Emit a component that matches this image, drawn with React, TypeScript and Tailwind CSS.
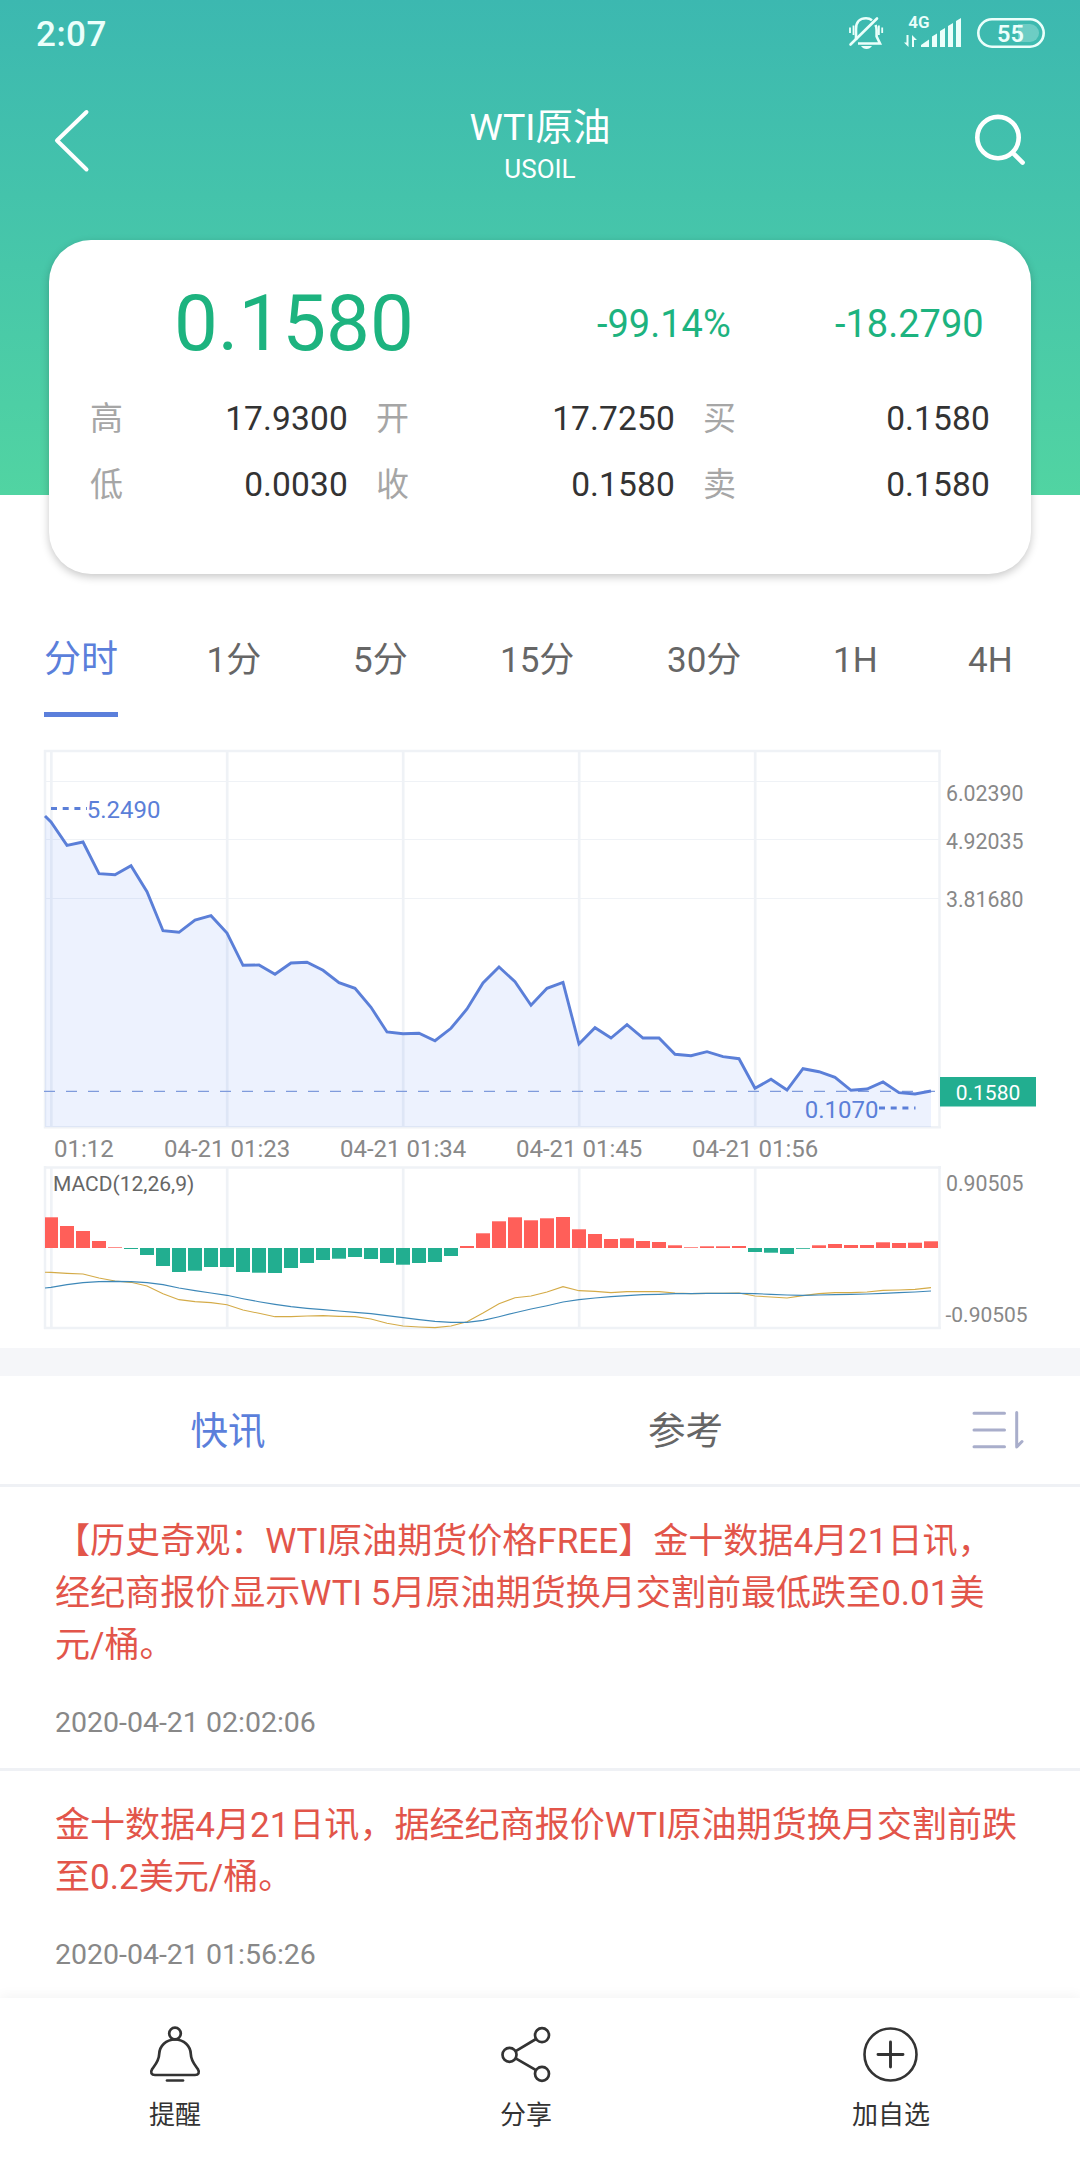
import React from "react";

const FONT = "font-['Roboto','Noto_Sans_CJK_SC',sans-serif]";

interface Cell {
  label: string;
  value: string;
}

interface NewsItem {
  lines: string[];
  time: string;
}

const cells: Cell[][] = [
  [
    { label: "高", value: "17.9300" },
    { label: "开", value: "17.7250" },
    { label: "买", value: "0.1580" },
  ],
  [
    { label: "低", value: "0.0030" },
    { label: "收", value: "0.1580" },
    { label: "卖", value: "0.1580" },
  ],
];

const periods = ["分时", "1分", "5分", "15分", "30分", "1H", "4H"];

const news: NewsItem[] = [
  {
    lines: [
      "【历史奇观：WTI原油期货价格FREE】金十数据4月21日讯，",
      "经纪商报价显示WTI 5月原油期货换月交割前最低跌至0.01美",
      "元/桶。",
    ],
    time: "2020-04-21 02:02:06",
  },
  {
    lines: ["金十数据4月21日讯，据经纪商报价WTI原油期货换月交割前跌", "至0.2美元/桶。"],
    time: "2020-04-21 01:56:26",
  },
];

// chart geometry: one sample every 16px, first sample at x = 51
const X0 = 51;
const STEP = 16;
const PLOT_LEFT = 45;
const gridX = [51.3, 227.2, 403.2, 579.2, 755.2];

const price = [
  822, 845.3, 842, 873.7, 874.7, 865.7, 891.7, 930.7, 932.3, 920, 915.7, 933, 965.3, 965, 974.3, 963,
  962.3, 970.3, 982.7, 988.3, 1007.3, 1032, 1033.7, 1033.3, 1040.7, 1028.3, 1009, 983, 967, 981.7,
  1005.3, 988.3, 982.3, 1044, 1027.7, 1038, 1024.7, 1038, 1038, 1054.3, 1055.7, 1051.7, 1056.7, 1058.7,
  1088.3, 1079.3, 1090, 1068.7, 1071.7, 1077.3, 1090.3, 1089, 1082, 1092.7, 1094, 1091,
];

const bars = [
  30.7, 22, 17, 7, 0.7, -1, -7, -18, -24, -22.7, -19, -19, -24, -24.7, -25, -20, -15, -12, -10.7, -9,
  -11, -15, -16.7, -15, -14, -8, 2, 14.7, 26.7, 30.7, 27.7, 29.7, 31, 18.7, 14, 9, 9.7, 7, 6, 2.7, 0.7,
  1.7, 1.7, 2, -4, -4.7, -6, -0.8, 2.7, 4, 3, 3, 5.7, 5, 5.3, 6.7,
];

// offsets in thirds of a pixel below y = 1140
const dif = [
  397, 400, 402, 414, 423, 427, 438, 461, 479, 485, 488, 494, 510, 520, 530, 530, 528, 527, 529, 530,
  537, 550, 558, 561, 563, 558, 545, 519, 491, 473, 468, 456, 440, 452, 454, 458, 455, 455, 455, 459,
  461, 460, 460, 459, 468, 471, 474, 467, 461, 458, 458, 456, 451, 450, 448, 443,
];
const dea = [
  442, 434, 428, 425, 424, 425, 428, 434, 444, 452, 459, 466, 476, 485, 493, 500, 505, 509, 513, 517,
  521, 527, 533, 539, 544, 547, 547, 541, 530, 518, 507, 497, 486, 479, 474, 470, 467, 464, 463, 461,
  461, 460, 460, 460, 461, 463, 465, 466, 465, 464, 463, 462, 460, 458, 456, 453,
];

const toPoints = (ys: number[]) => ys.map((y, i) => `${X0 + i * STEP},${y}`).join(" ");
const macdY = (v: number) => 1140 + v / 3;

function StatusBar() {
  return (
    <div className="flex h-[68px] items-center justify-between pl-[36px] pr-[35px] text-[#ebfffb]">
      <span className="pt-[2px] text-[35px] font-medium leading-[68px] tracking-[0.5px]">2:07</span>
      <svg width="200" height="68" viewBox="845 0 200 68" fill="none">
        <g stroke="currentColor" strokeWidth="2.6">
          <path d="M856 40V29C856 22 860 18.3 866 18.3C868.5 18.3 870.5 19 872 20.2M875.5 25C876.3 26.5 876.6 28 876.6 30V36.5L880 43.5H858" />
          <path d="M850.5 44.5L877 18.5" strokeLinecap="round" />
          <path d="M850 27.5V33M853.5 25.5V35M878.9 25.5V35M882.2 27.5V33" strokeWidth="1.8" />
        </g>
        <path d="M861 46H872Q870 49 866.5 49Q863 49 861 46Z" fill="currentColor" />
        <text x="908.3" y="28" fontSize="17" fontWeight="600" fill="currentColor">4G</text>
        <path d="M908.5 35V47L904 42.5H906.5V35ZM912 47V35L917 40H914V47Z" fill="currentColor" />
        <path
          d="M921 47V45L929 39.5V47ZM932 47V36.5L937 33.5V47ZM940 47V31L945 28V47ZM948 47V26L953 23V47ZM956 47V21L961 18V47Z"
          fill="currentColor"
        />
        <rect x="978.3" y="19.3" width="65.4" height="27.4" rx="13.7" stroke="currentColor" strokeWidth="2.6" />
        <path d="M1018 24H1030A9 9 0 0 1 1030 42H1018Z" fill="currentColor" opacity="0.28" />
        <text x="1010.5" y="41.8" fontSize="23.5" fontWeight="600" textAnchor="middle" fill="currentColor">55</text>
      </svg>
    </div>
  );
}

function TitleBar() {
  return (
    <div className="flex h-[144px] items-center justify-between px-[52px]">
      <svg width="56" height="144" viewBox="52 68 56 144" fill="none" stroke="white" strokeWidth="4" strokeLinecap="round" strokeLinejoin="round">
        <path d="M86.5 112L57 140.5L86.5 169.5" />
      </svg>
      <div className="flex flex-col items-center pt-[11px] text-white">
        <h1 className="text-[37.5px] leading-[46px]">WTI原油</h1>
        <p className="text-[26px] leading-[38px]">USOIL</p>
      </div>
      <svg width="56" height="144" viewBox="972 68 56 144" fill="none" stroke="white" strokeWidth="4.6" strokeLinecap="round">
        <circle cx="998" cy="137.6" r="20.7" />
        <path d="M1012.8 152.8L1022.6 162.6" />
      </svg>
    </div>
  );
}

function QuoteCard() {
  return (
    <section className="relative mx-[49px] -mt-[255px] h-[334px] shrink-0 rounded-[42px] bg-white shadow-[0_3px_9px_rgba(0,0,0,0.22)]">
      <div className="flex h-[146px] items-center pt-[22px] text-[#1db37f]">
        <span className="w-[491px] pl-[125px] text-[78px] leading-[124px]">0.1580</span>
        <span className="w-[245px] pl-[57px] text-[38px] leading-[124px]">-99.14%</span>
        <span className="w-[246px] pl-[50px] text-[38px] leading-[124px]">-18.2790</span>
      </div>
      {cells.map((row, i) => (
        <div key={i} className="flex h-[66px] items-center gap-[28px] px-[41px] text-[33px] leading-[66px]">
          {row.map((c, j) => (
            <div key={j} className={j === 0 ? "flex w-[258px] justify-between" : j === 1 ? "flex w-[299px] justify-between" : "flex flex-1 justify-between"}>
              <span className="text-[#a6a6a6]">{c.label}</span>
              <span className="text-[33.5px] tracking-[0.15px] text-[#333333]">{c.value}</span>
            </div>
          ))}
        </div>
      ))}
    </section>
  );
}

function PeriodTabs() {
  return (
    <nav className="grid h-[166px] shrink-0 grid-cols-[162.5px_146.5px_147px_167px_166px_135px_1fr] justify-items-start pl-[44px] pt-[51px]">
      {periods.map((p, i) => (
        <div
          key={p}
          className={
            i === 0
              ? "h-[92px] border-b-[5px] border-[#5b7fdb] text-[37px] leading-[70px] text-[#5b7fdb]"
              : "h-[92px] text-[35px] leading-[71px] text-[#666666]"
          }
        >
          {p}
        </div>
      ))}
    </nav>
  );
}

function Chart() {
  const line = `${PLOT_LEFT},816 ${toPoints(price)}`;
  return (
    <svg className="block shrink-0" width="1080" height="608" viewBox="0 740 1080 608" fill="none">
      <g stroke="#eff2f6">
        <path d="M45 781.5H939M45 839.5H939M45 898.5H939" strokeWidth="1" />
        {gridX.map((x) => (
          <path key={x} d={`M${x} 751V1127M${x} 1168V1328`} strokeWidth="2.7" />
        ))}
        <path d="M45 750V1128.5M44 751H941M939.5 750V1128.5M44 1127.3H941" strokeWidth="2.5" />
        <path d="M45 1166V1329M44 1167.5H941M939.5 1166V1329M44 1328H941" strokeWidth="2.5" />
      </g>

      <polygon points={`${line} 931,1127 ${PLOT_LEFT},1127`} fill="#5b87f5" fillOpacity="0.11" />
      <path d="M44 1091.3H935" stroke="#7f9bdc" strokeWidth="1.2" strokeDasharray="11 11" />
      <polyline points={line} stroke="#5b7fd8" strokeWidth="2.9" strokeLinejoin="miter" />
      <path d="M51 808.5H87M879 1108H915.5" stroke="#5b7fd8" strokeWidth="2.8" strokeDasharray="6 5.7" />

      <g fontSize="24" fill="#5b7fd8">
        <text x="86.8" y="818.2">5.2490</text>
        <text x="804.8" y="1118">0.1070</text>
      </g>

      <g fontSize="24" fill="#888888">
        <text x="54" y="1157">01:12</text>
        <text x="164" y="1157">04-21 01:23</text>
        <text x="340" y="1157">04-21 01:34</text>
        <text x="516" y="1157">04-21 01:45</text>
        <text x="692" y="1157">04-21 01:56</text>
      </g>

      <g fontSize="21.3" fill="#888888">
        <text x="946" y="801.3">6.02390</text>
        <text x="946" y="849.3">4.92035</text>
        <text x="946" y="907.3">3.81680</text>
        <text x="946" y="1191.2">0.90505</text>
        <text x="945.5" y="1322.2" fontSize="21">-0.90505</text>
      </g>

      <rect x="940" y="1077" width="96" height="29.5" fill="#22ae90" />
      <text x="988" y="1100" fontSize="21" textAnchor="middle" fill="white">0.1580</text>

      <text x="53" y="1191" fontSize="21" fill="#666666">MACD(12,26,9)</text>
      {bars.map((h, i) => {
        const left = Math.max(PLOT_LEFT, X0 + i * STEP - 7);
        const right = X0 + i * STEP + 7;
        return (
          <rect
            key={i}
            x={left}
            y={h > 0 ? 1248 - h : 1248}
            width={right - left}
            height={Math.abs(h)}
            fill={h > 0 ? "#ff5f59" : "#22ae90"}
          />
        );
      })}
      <polyline points={`${PLOT_LEFT},1272.3 ${toPoints(dif.map(macdY))}`} stroke="#d4ab48" strokeWidth="1.1" />
      <polyline points={`${PLOT_LEFT},1288 ${toPoints(dea.map(macdY))}`} stroke="#3e88b8" strokeWidth="1.1" />
    </svg>
  );
}

function NewsTabs() {
  return (
    <div className="flex h-[111px] shrink-0 items-center border-b-[3px] border-[#eff1f5] text-[37.5px] leading-[108px]">
      <span className="w-[456px] pt-[2px] text-center text-[#5b7fdb]">快讯</span>
      <span className="w-[459px] pt-[2px] text-center text-[#666666]">参考</span>
      <svg className="ml-[55px]" width="56" height="44" viewBox="970 1408 56 44" fill="none" stroke="#a9aecb" strokeWidth="3" strokeLinecap="round" strokeLinejoin="round">
        <path d="M974 1413.2H1004.5M974 1430H1004.5M974 1446.7H1004.5M1016.7 1412.5V1447L1022 1441.5" />
      </svg>
    </div>
  );
}

function BottomBar() {
  return (
    <footer className="relative flex h-[162px] shrink-0 bg-white text-[26px] leading-[34px] text-[#333333] shadow-[0_-2px_12px_rgba(0,0,0,0.05)]">
      <div className="flex w-[350px] flex-col items-center pt-[25px]">
        <svg width="60" height="64" viewBox="145 2023 60 64" fill="none" stroke="currentColor" strokeWidth="2.7" strokeLinecap="round" strokeLinejoin="round">
          <circle cx="175" cy="2033.5" r="5.8" />
          <path d="M175 2039.5C166 2039.5 159.5 2046 159.2 2054C159 2061 155 2065 152.2 2069C150 2072.5 151.5 2075 155 2075H195C198.5 2075 200 2072.5 197.8 2069C195 2065 191 2061 190.8 2054C190.5 2046 184 2039.5 175 2039.5Z" />
          <path d="M167 2080.5H183" />
        </svg>
        <span className="mt-[11px]">提醒</span>
      </div>
      <div className="flex w-[352px] flex-col items-center pt-[25px]">
        <svg width="60" height="64" viewBox="496 2023 60 64" fill="none" stroke="currentColor" strokeWidth="2.7">
          <circle cx="542" cy="2035.2" r="7" />
          <circle cx="509.5" cy="2054.8" r="7" />
          <circle cx="542" cy="2073.8" r="7" />
          <path d="M515.7 2051.2L536 2039M515.7 2058.3L536 2070.2" />
        </svg>
        <span className="mt-[11px]">分享</span>
      </div>
      <div className="flex flex-1 flex-col items-center pt-[25px]">
        <svg width="60" height="64" viewBox="861 2023 60 64" fill="none" stroke="currentColor" strokeWidth="2.6" strokeLinecap="round">
          <circle cx="890.5" cy="2054.5" r="26" />
          <path d="M878 2054.5H903M890.5 2042V2067" strokeWidth="2.9" />
        </svg>
        <span className="mt-[11px]">加自选</span>
      </div>
    </footer>
  );
}

export default function App() {
  return (
    <div className={`${FONT} flex h-[2160px] w-[1080px] flex-col overflow-hidden bg-white`} lang="zh-CN">
      <header className="h-[495px] shrink-0 bg-linear-to-b from-[#3cb8b0] to-[#51d4a2]">
        <StatusBar />
        <TitleBar />
      </header>
      <QuoteCard />
      <PeriodTabs />
      <Chart />
      <div className="h-[28px] shrink-0 bg-[#f5f6f9]" />
      <NewsTabs />
      <main className="min-h-0 flex-1">
        {news.map((n) => (
          <article key={n.time} className="border-b-[3px] border-[#eff1f5] px-[55px] pb-[26px] pt-[28px]">
            {n.lines.map((l) => (
              <p key={l} className="whitespace-nowrap text-[35.05px] leading-[52px] text-[#e2554a]">{l}</p>
            ))}
            <time className="mt-[32px] block text-[28.5px] leading-[39px] text-[#888888]">{n.time}</time>
          </article>
        ))}
      </main>
      <BottomBar />
    </div>
  );
}
